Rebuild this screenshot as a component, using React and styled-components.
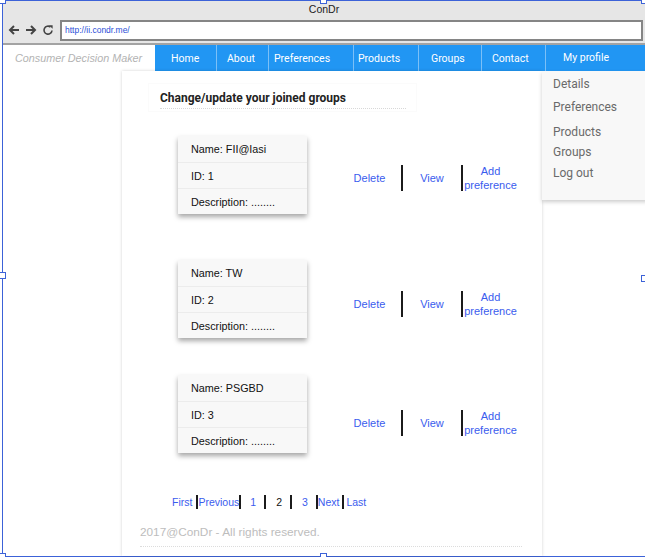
import React from 'react'
import styled, { createGlobalStyle } from 'styled-components'

const GlobalStyle = createGlobalStyle`
  body {
    margin: 0;
    background: #ffffff;
    font-family: Roboto, "Liberation Sans", Arial, sans-serif;
  }
`

const LINK = '#3a5cee'

const Frame = styled.div`
  position: relative;
  box-sizing: border-box;
  margin-left: 2px;
  width: 643px;
  height: 557px;
  border: 1px solid #3c62d8;
  border-right: none;
  background: #ffffff;
  display: flex;
  flex-direction: column;
`

const Handle = styled.span`
  position: absolute;
  left: ${p => p.$x}px;
  top: ${p => p.$y}px;
  width: 5px;
  height: 5px;
  background: #ffffff;
  border: 1px solid #3c62d8;
  z-index: 5;
`

const TitleBar = styled.div`
  height: 16px;
  background: #e6e6e6;
  display: flex;
  align-items: center;
  justify-content: center;
  font-family: "Liberation Sans", Arial, sans-serif;
  font-size: 10.5px;
  color: #222;
`

const Toolbar = styled.div`
  height: 26px;
  background: #e6e6e6;
  border-bottom: 2px solid #a3a3a3;
  display: flex;
  align-items: center;
  padding-left: 5px;
  gap: 5px;
`

const ToolIcon = styled.svg`
  width: 12px;
  height: 12px;
  flex: none;
`

const AddressBox = styled.div`
  box-sizing: border-box;
  margin-left: 1px;
  flex: 1;
  margin-right: 2px;
  height: 21px;
  background: #ffffff;
  border: 2px solid #858585;
  display: flex;
  align-items: center;
  padding-left: 3px;
  font-family: "Liberation Sans", Arial, sans-serif;
  font-size: 8.5px;
  color: #2b4fd8;
`

const NavBar = styled.div`
  display: flex;
  height: 26px;
`

const Brand = styled.div`
  width: 152px;
  padding-left: 12px;
  box-sizing: border-box;
  display: flex;
  align-items: center;
  font-family: "Liberation Sans", Arial, sans-serif;
  font-style: italic;
  font-size: 10.8px;
  color: #b3b3b3;
`

const Menu = styled.div`
  flex: 1;
  display: flex;
  background: #2196f3;
  margin-right: -2px;
`

const MenuItem = styled.div`
  box-sizing: border-box;
  width: ${p => (p.$w ? `${p.$w}px` : 'auto')};
  flex: ${p => (p.$w ? 'none' : '1')};
  padding-left: ${p => p.$pl}px;
  padding-bottom: ${p => p.$lift || 0}px;
  display: flex;
  align-items: center;
  color: #ffffff;
  font-size: 10.5px;
  border-left: ${p => (p.$first ? 'none' : '1px solid #7cc0f7')};
`

const Body = styled.div`
  flex: 1;
  display: flex;
  min-height: 0;
`

const Content = styled.div`
  margin-left: 119px;
  width: 420px;
  background: #ffffff;
  box-shadow: 0 0 3px rgba(0, 0, 0, 0.18);
  display: flex;
  flex-direction: column;
`

const HeadingBox = styled.div`
  margin: 12px 0 0 26px;
  width: 269px;
  box-sizing: border-box;
  padding: 6px 10px 2px 11px;
  border: 1px solid #fbfbfb;
`

const Heading = styled.h2`
  margin: 0;
  font-size: 12px;
  line-height: 16px;
  font-weight: 700;
  color: #222;
  padding-bottom: 2px;
  border-bottom: 1px dotted #d8d8d8;
`

const GroupRow = styled.div`
  display: flex;
  align-items: center;
  margin: ${p => p.$top}px 0 0 56px;
`

const GroupCard = styled.div`
  width: 129px;
  background: #f8f8f8;
  box-shadow: 0 3px 5px rgba(0, 0, 0, 0.35);
`

const CardLine = styled.div`
  box-sizing: border-box;
  height: 26px;
  padding-left: 13px;
  display: flex;
  align-items: center;
  font-family: "Liberation Sans", Arial, sans-serif;
  font-size: 10.8px;
  color: #111;
  & + & {
    border-top: 1px solid #ececec;
  }
`

const Actions = styled.div`
  display: flex;
  align-items: center;
  margin: ${p => p.$shift}px 0 0 31px;
`

const ActionLink = styled.a`
  width: ${p => p.$w}px;
  text-align: center;
  font-family: "Liberation Sans", Arial, sans-serif;
  font-size: 11px;
  line-height: 14px;
  color: ${LINK};
  text-decoration: none;
  cursor: pointer;
`

const Bar = styled.span`
  width: 2px;
  height: ${p => p.$h}px;
  background: #1b1b1b;
  flex: none;
`

const Pagination = styled.div`
  display: flex;
  align-items: center;
  margin: 41px 0 0 50px;
  height: 16px;
`

const PageItem = styled.a`
  padding: 0 ${p => p.$r || 0}px 0 ${p => p.$l || 0}px;
  font-family: "Liberation Sans", Arial, sans-serif;
  font-size: 10.5px;
  color: ${p => (p.$current ? '#111' : LINK)};
  text-decoration: none;
  cursor: pointer;
`

const Footer = styled.div`
  margin: 14px 20px 0 18px;
  padding-bottom: 6px;
  border-bottom: 1px dotted #dcdcdc;
  font-family: "Liberation Sans", Arial, sans-serif;
  font-size: 11.8px;
  line-height: 16px;
  color: #bdbdbd;
`

const ProfileMenu = styled.div`
  position: absolute;
  left: 539px;
  top: 70px;
  width: 106px;
  height: 129px;
  box-sizing: border-box;
  padding-left: 11px;
  background: #f8f8f8;
  box-shadow: 0 2px 4px rgba(0, 0, 0, 0.2);
  z-index: 3;
`

const ProfileItem = styled.div`
  margin-top: ${p => p.$mt}px;
  font-size: 12px;
  line-height: 16px;
  color: #6a6a6a;
`

const menu = [
  { label: 'Home', w: 61, pl: 16 },
  { label: 'About', w: 52, pl: 10 },
  { label: 'Preferences', w: 85, pl: 5 },
  { label: 'Products', w: 65, pl: 4 },
  { label: 'Groups', w: 63, pl: 12 },
  { label: 'Contact', w: 64, pl: 10 },
  { label: 'My profile', pl: 17, lift: 2 },
]

const groups = [
  { name: 'FII@Iasi', id: 1, top: 24, shift: 6 },
  { name: 'TW', id: 2, top: 46, shift: 9 },
  { name: 'PSGBD', id: 3, top: 37, shift: 17 },
]

const profile = [
  { label: 'Details', mt: 5 },
  { label: 'Preferences', mt: 7 },
  { label: 'Products', mt: 9 },
  { label: 'Groups', mt: 4 },
  { label: 'Log out', mt: 5 },
]

const handles = [
  [-4, -4], [317, -4], [638, -4],
  [-4, 271], [638, 274],
  [-4, 552], [317, 552],
]

function ArrowIcon({ flip }) {
  return (
    <ToolIcon viewBox="0 0 12 12" style={flip ? { transform: 'scaleX(-1)' } : undefined}>
      <path d="M11 6H2M6 2L2 6l4 4" fill="none" stroke="#444" strokeWidth="2" />
    </ToolIcon>
  )
}

function ReloadIcon() {
  return (
    <ToolIcon viewBox="0 0 12 12">
      <path d="M10 6.5A4 4 0 1 1 8.5 3" fill="none" stroke="#444" strokeWidth="1.6" />
      <path d="M7 1.2h3.6v3.6z" fill="#444" />
    </ToolIcon>
  )
}

export default function App() {
  return (
    <>
      <GlobalStyle />
      <Frame>
        {handles.map(([x, y], i) => <Handle key={i} $x={x} $y={y} />)}
        <TitleBar>ConDr</TitleBar>
        <Toolbar>
          <ArrowIcon />
          <ArrowIcon flip />
          <ReloadIcon />
          <AddressBox>http://ii.condr.me/</AddressBox>
        </Toolbar>
        <NavBar>
          <Brand>Consumer Decision Maker</Brand>
          <Menu>
            {menu.map((m, i) => (
              <MenuItem key={m.label} $w={m.w} $pl={m.pl} $lift={m.lift} $first={i === 0}>
                {m.label}
              </MenuItem>
            ))}
          </Menu>
        </NavBar>
        <Body>
          <Content>
            <HeadingBox>
              <Heading>Change/update your joined groups</Heading>
            </HeadingBox>
            {groups.map(g => (
              <GroupRow key={g.id} $top={g.top}>
                <GroupCard>
                  <CardLine>Name: {g.name}</CardLine>
                  <CardLine>ID: {g.id}</CardLine>
                  <CardLine>Description: ........</CardLine>
                </GroupCard>
                <Actions $shift={g.shift}>
                  <ActionLink $w={63}>Delete</ActionLink>
                  <Bar $h={26} />
                  <ActionLink $w={58}>View</ActionLink>
                  <Bar $h={26} />
                  <ActionLink $w={55}>Add<br />preference</ActionLink>
                </Actions>
              </GroupRow>
            ))}
            <Pagination>
              <PageItem $r={4}>First</PageItem>
              <Bar $h={14} />
              <PageItem>Previous</PageItem>
              <Bar $h={14} />
              <PageItem $l={9} $r={8}>1</PageItem>
              <Bar $h={14} />
              <PageItem $l={10} $r={8} $current>2</PageItem>
              <Bar $h={14} />
              <PageItem $l={10} $r={8}>3</PageItem>
              <Bar $h={14} />
              <PageItem $r={3}>Next</PageItem>
              <Bar $h={14} />
              <PageItem $l={2}>Last</PageItem>
            </Pagination>
            <Footer>2017@ConDr - All rights reserved.</Footer>
          </Content>
        </Body>
        <ProfileMenu>
          {profile.map(p => (
            <ProfileItem key={p.label} $mt={p.mt}>{p.label}</ProfileItem>
          ))}
        </ProfileMenu>
      </Frame>
    </>
  )
}
